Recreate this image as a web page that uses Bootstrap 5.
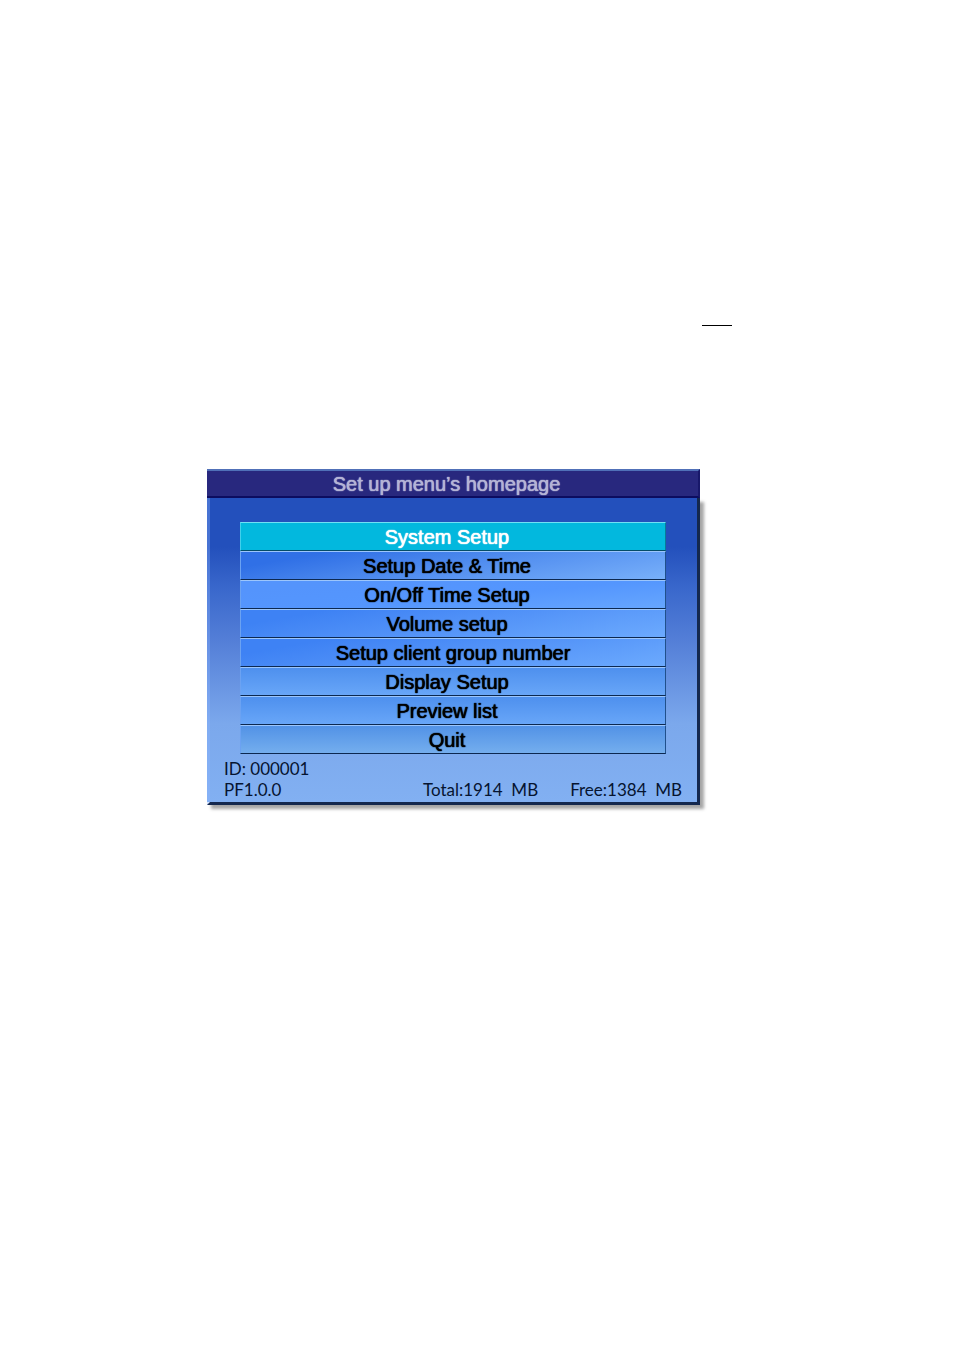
<!DOCTYPE html>
<html lang="en">
<head>
<meta charset="UTF-8">
<meta name="viewport" content="width=device-width, initial-scale=1.0">
<title>Set up menu's homepage</title>
<link href="https://cdn.jsdelivr.net/npm/bootstrap@5.3.3/dist/css/bootstrap.min.css" rel="stylesheet">
<style>
    body {
        background: #fff;
        color: #000;
        font-family: "Liberation Sans", Arial, sans-serif;
    }
    .sheet {
        max-width: 732px;
        padding: 325px 0 64px 207px;
    }
    .sheet-rule {
        width: 30px;
        border-top: 1px solid #000;
        opacity: 1;
        margin-bottom: 143px;
    }
    .setup-panel {
        max-width: 493px;
    }
    .setup-title {
        height: 29px;
        padding-right: 12px;
        border-top: 2px solid #5070b8;
        border-right: 2px solid #18186a;
        border-bottom: 2px solid #0c0c60;
        background: #28287e;
        color: #b4b4d6;
        font-size: 20px;
        line-height: 26px;
        text-shadow: 0 0 1px currentColor, 0 0 1px currentColor;
    }
    .setup-body {
        padding: 24px 31px 0 30px;
        border-left: 3px solid rgba(140, 180, 255, .35);
        border-right: 3px solid #14284e;
        border-bottom: 3px solid #14284e;
        background: linear-gradient(#2350bc 0%, #2350bc 16%, #3a68cc 30%, #5580d8 48%, #7ba8ec 74%, #82b0f2 100%);
        box-shadow: 4px 4px 3px rgba(0, 0, 0, .35);
    }
    .menu-item {
        height: 29px;
        padding: 0 12px 0 0;
        border: 1px solid;
        border-color: #9cc6fc #20508c #0c2850 #6ba2f2;
        color: #000;
        font-size: 20px;
        line-height: 26px;
        text-shadow: 0 0 1px currentColor, 0 0 1px currentColor;
    }
    .menu-item-active {
        border-color: #70e0f4 #067c98 #044c68 #40d0ec;
        background: #02b8de;
        color: #fff;
    }
    .menu-item-long { padding-right: 0; }
    .tone-date { background: linear-gradient(170deg, #3070e6 15%, #5490f0 55%, #78b0fa); }
    .tone-bright { background: linear-gradient(175deg, #5494fc 15%, #5496fe 55%, #66a6fe); }
    .tone-deep { background: linear-gradient(170deg, #3e82f4 15%, #5494f8 55%, #6caafe); }
    .tone-soft { background: linear-gradient(#4e90ee, #68a6f8); }
    .tone-pale { background: linear-gradient(#5292e6, #74aeee); }
    .setup-info {
        margin: 0 -16px;
        padding: 4px 0 2px;
        color: #061430;
        font-family: Lato, sans-serif;
        font-size: 17px;
        line-height: 21px;
    }
    .info-size { white-space: pre; }
</style>
</head>
<body>
<main class="sheet">
    <hr class="sheet-rule ms-auto mt-0">

    <section class="setup-panel">
        <h1 class="setup-title text-center fw-normal m-0">Set up menu’s homepage</h1>
        <div class="setup-body">
            <!-- Menu options -->
            <nav class="d-grid" aria-label="Setup menu">
                <button type="button" class="menu-item menu-item-active" aria-current="true">System Setup</button>
                <button type="button" class="menu-item tone-date">Setup Date &amp; Time</button>
                <button type="button" class="menu-item tone-bright">On/Off Time Setup</button>
                <button type="button" class="menu-item tone-deep">Volume setup</button>
                <button type="button" class="menu-item menu-item-long tone-deep">Setup client group number</button>
                <button type="button" class="menu-item tone-soft">Display Setup</button>
                <button type="button" class="menu-item tone-soft">Preview list</button>
                <button type="button" class="menu-item tone-pale">Quit</button>
            </nav>

            <!-- Device info -->
            <div class="setup-info">
                <div>ID: 000001</div>
                <div class="d-flex">
                    <span class="me-auto">PF1.0.0</span>
                    <span class="info-size">Total:1914  MB</span>
                    <span class="info-size ms-4 ps-2">Free:1384  MB</span>
                </div>
            </div>
        </div>
    </section>
</main>
<script src="https://cdn.jsdelivr.net/npm/bootstrap@5.3.3/dist/js/bootstrap.bundle.min.js"></script>
</body>
</html>
